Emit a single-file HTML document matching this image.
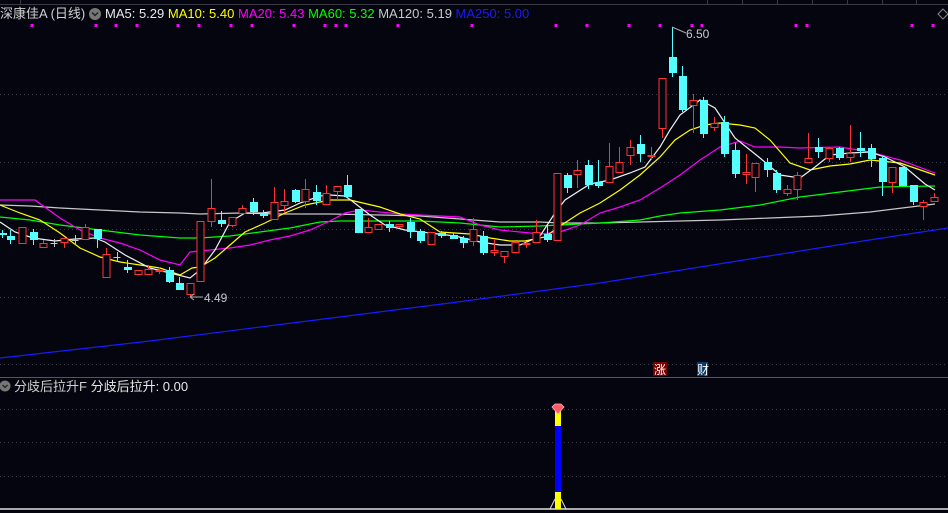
<!DOCTYPE html>
<html><head><meta charset="utf-8"><style>
html,body{margin:0;padding:0;background:#05050f;width:948px;height:513px;overflow:hidden}
svg{display:block}
text{font-family:"Liberation Sans","Noto Sans CJK SC",sans-serif}
</style></head><body>
<svg id="s" width="948" height="513" xmlns="http://www.w3.org/2000/svg">
<rect width="948" height="513" fill="#05050f"/>
<line x1="0" y1="4.5" x2="948" y2="4.5" stroke="#3a3a44"/>
<line x1="20.5" y1="0" x2="20.5" y2="4" stroke="#3a3a44"/>
<g stroke="#3a3a44"><line x1="707.5" y1="0" x2="707.5" y2="4"/><line x1="742.5" y1="0" x2="742.5" y2="4"/><line x1="777.5" y1="0" x2="777.5" y2="4"/><line x1="812.5" y1="0" x2="812.5" y2="4"/><line x1="847.5" y1="0" x2="847.5" y2="4"/><line x1="882.5" y1="0" x2="882.5" y2="4"/><line x1="916.5" y1="0" x2="916.5" y2="4"/></g>
<g stroke="#3c3c48" stroke-dasharray="1,3">
<line x1="0" y1="94.5" x2="948" y2="94.5"/><line x1="0" y1="162.5" x2="948" y2="162.5"/><line x1="0" y1="229.5" x2="948" y2="229.5"/><line x1="0" y1="297.5" x2="948" y2="297.5"/><line x1="0" y1="364.5" x2="948" y2="364.5"/>
<line x1="0" y1="409.5" x2="948" y2="409.5"/><line x1="0" y1="442.5" x2="948" y2="442.5"/><line x1="0" y1="476.5" x2="948" y2="476.5"/>
</g>
<line x1="0" y1="377.5" x2="948" y2="377.5" stroke="#55555f"/>
<line x1="0" y1="509" x2="948" y2="509" stroke="#e0e0e0" stroke-width="1.5"/>
<text x="0" y="18" font-size="13" fill="#d0d0d0">深康佳A (日线)</text>
<circle cx="95" cy="14" r="6" fill="#777"/><path d="M92 12.5l3 3 3-3" stroke="#222" stroke-width="1.5" fill="none"/>
<text x="105" y="18" font-size="13"><tspan fill="#e8e8e8">MA5: 5.29 </tspan><tspan fill="#ffff00"> MA10: 5.40 </tspan><tspan fill="#ff00ff"> MA20: 5.43 </tspan><tspan fill="#00ff00"> MA60: 5.32 </tspan><tspan fill="#c8c8c8"> MA120: 5.19 </tspan><tspan fill="#1a1aff"> MA250: 5.00</tspan></text>
<path d="M943 9l5 5-5 5-5-5z" stroke="#888" fill="none"/>
<g id="dots" fill="#ff00ff"></g>
<g id="ma" fill="none" stroke-width="1.2"></g>
<g id="k"></g>
<line x1="672" y1="27" x2="686" y2="33" stroke="#aaa"/>
<text x="686" y="38" font-size="12" fill="#c8c8d0">6.50</text>
<path d="M190 297l4-3M190 297l4 3M190 297h13" stroke="#aaa" fill="none"/>
<text x="204" y="302" font-size="12" fill="#c8c8d0">4.49</text>
<rect x="653" y="362" width="14" height="14" fill="#7a0000"/><text x="654" y="374" font-size="12" fill="#fff">涨</text>
<rect x="697" y="362" width="11" height="14" fill="#0a3a6a"/><text x="697" y="374" font-size="12" fill="#fff">财</text>
<circle cx="5" cy="386" r="5.5" fill="#777"/><path d="M2.5 385l2.5 2.5 2.5-2.5" stroke="#222" stroke-width="1.3" fill="none"/>
<text x="14" y="391" font-size="13" fill="#d0d0d0">分歧后拉升F <tspan fill="#e8e8e8">分歧后拉升: 0.00</tspan></text>
<rect x="555" y="411" width="6" height="98" fill="#ffff00"/>
<rect x="555" y="426" width="6" height="66" fill="#0000ff"/>
<path d="M550 509l5-10M566 509l-5-10" stroke="#ddd" fill="none"/>
<path d="M552 407l3-3h6l3 3-6 7z" fill="#ff5a6a" stroke="#ffb0b8" stroke-width="0.8"/>
</svg>
<script>
var NS="http://www.w3.org/2000/svg";
function el(p,t,a){var e=document.createElementNS(NS,t);for(var k in a)e.setAttribute(k,a[k]);document.getElementById(p).appendChild(e);}
[32,96,116,137,178,199,231,252,294,325,336,346,398,472,556,587,629,660,692,702,796,807,912,933].forEach(function(x){el("dots","rect",{x:x-1.5,y:24,width:3,height:3});});
var M={
"#1a1aff":[[0,358],[150,341],[300,322],[450,303],[600,283],[750,259],[850,243],[948,228]],
"#c8c8c8":[[0,205],[30,206],[60,208],[100,210],[140,212],[180,213],[200,214],[240,213],[280,214],[330,214],[380,215],[420,216],[500,222],[540,222],[560,223],[600,223],[640,222],[680,221],[720,220],[770,218],[820,216],[870,212],[935,204]],
"#00ff00":[[0,217],[30,220],[60,225],[100,230],[140,235],[180,238],[200,238],[230,236],[260,232],[290,228],[320,222],[340,221],[380,221],[420,221],[460,223],[500,227],[540,226],[560,225],[600,223],[640,220],[660,216],[680,213],[720,210],[760,205],[800,197],[840,192],[880,187],[935,186]],
"#ff00ff":[[0,200],[35,200],[60,218],[80,230],[100,238],[120,243],[140,250],[160,260],[180,265],[190,252],[210,250],[230,248],[250,245],[270,240],[290,236],[310,230],[330,221],[345,213],[360,210],[380,212],[400,214],[420,215],[460,217],[480,225],[500,230],[520,232],[540,234],[560,232],[580,225],[600,213],[620,207],[640,200],[660,188],[680,175],[700,160],[720,147],[740,141],[755,147],[780,147],[800,148],[840,147],[870,152],[900,160],[935,173]],
"#ffff00":[[0,205],[20,213],[40,220],[60,233],[80,248],[100,257],[120,262],[140,265],[160,268],[180,275],[192,268],[200,267],[215,258],[230,245],[245,232],[265,223],[285,213],[305,205],[330,200],[350,200],[380,207],[400,214],[420,219],[440,232],[470,234],[490,238],[510,241],[525,241],[545,237],[560,226],[580,213],[600,203],[620,190],[640,175],[660,157],[675,140],[690,130],[705,125],[720,123],[740,125],[755,128],[770,140],[790,163],[810,170],[830,166],[850,164],[870,160],[900,163],[935,175]],
"#f0f0f0":[[0,222],[15,232],[33,238],[55,241],[75,239],[95,238],[105,242],[125,255],[150,268],[170,273],[190,278],[200,270],[215,250],[230,222],[245,213],[262,213],[285,210],[300,203],[320,196],[330,195],[345,196],[352,201],[370,215],[385,225],[405,230],[430,233],[455,236],[480,242],[500,245],[520,245],[540,236],[555,213],[565,200],[590,184],[610,180],[630,173],[645,167],[660,147],[670,130],[680,115],[700,100],[715,108],[735,138],[760,158],[780,175],[800,178],[815,167],[830,155],[850,153],[870,152],[885,157],[905,167],[925,184],[935,190]]};
for(var c in M)el("ma","polyline",{points:M[c].map(function(p){return p.join(",")}).join(" "),stroke:c});
// x, high, top, bottom, low, type
var K=[[2,230,233,233,238,"c"],[10,230,236,239,244,"c"],[22,227,227,243,243,"r"],[33,229,232,239,245,"c"],[43,240,243,247,248,"r"],[54,239,243,243,247,"g"],[64,238,238,242,248,"r"],[75,235,240,240,245,"g"],[85,224,227,239,239,"r"],[97,229,229,238,248,"c"],[106,248,254,277,277,"r"],[117,252,257,257,262,"g"],[127,260,267,269,273,"c"],[138,270,270,274,274,"r"],[148,265,269,274,274,"r"],[159,267,270,271,274,"r"],[169,267,270,281,283,"c"],[179,277,283,289,290,"c"],[190,283,283,294,297,"r"],[200,221,221,281,281,"r"],[211,179,208,221,227,"r"],[221,211,220,223,227,"c"],[232,217,217,225,227,"r"],[242,205,208,213,213,"r"],[253,198,202,211,215,"c"],[263,210,213,215,218,"c"],[274,187,202,219,219,"r"],[284,189,201,205,213,"r"],[295,189,190,201,203,"c"],[305,179,189,201,208,"r"],[316,185,192,200,205,"c"],[326,185,193,204,204,"r"],[337,186,186,191,200,"r"],[347,175,185,196,196,"c"],[358,209,209,232,232,"c"],[368,218,227,232,232,"r"],[378,224,224,229,229,"r"],[389,221,224,227,232,"c"],[399,224,224,226,228,"r"],[410,218,222,231,238,"c"],[420,229,231,240,243,"c"],[431,232,232,244,245,"r"],[441,231,233,235,238,"c"],[453,233,235,238,239,"c"],[463,236,238,242,248,"c"],[473,218,229,241,246,"r"],[483,231,236,252,255,"c"],[494,240,250,252,256,"r"],[504,251,251,256,263,"r"],[515,242,242,252,252,"r"],[526,242,243,244,248,"r"],[536,220,232,242,242,"r"],[547,225,234,239,242,"c"],[557,173,173,240,241,"r"],[567,173,175,187,193,"c"],[577,160,170,174,188,"r"],[588,160,165,184,189,"c"],[598,160,182,185,188,"c"],[609,143,166,182,183,"r"],[619,147,162,172,172,"r"],[630,140,147,155,165,"r"],[640,135,144,153,162,"c"],[651,147,155,156,160,"r"],[662,78,78,128,138,"r"],[672,27,57,72,77,"c"],[682,66,76,109,112,"c"],[693,94,100,105,133,"r"],[703,97,100,133,138,"c"],[714,117,123,127,131,"r"],[724,116,122,153,157,"c"],[735,143,150,173,178,"c"],[746,154,172,174,184,"r"],[755,163,163,177,192,"r"],[767,158,162,169,177,"c"],[776,170,173,189,193,"c"],[787,185,189,193,196,"r"],[797,172,175,189,200,"r"],[808,133,158,162,162,"r"],[818,138,147,151,158,"c"],[829,147,148,158,162,"r"],[839,147,148,157,160,"c"],[850,125,153,157,162,"r"],[860,132,148,150,157,"c"],[871,144,148,158,167,"c"],[882,156,158,181,196,"c"],[892,167,167,182,193,"r"],[902,167,167,185,185,"c"],[913,185,185,201,205,"c"],[923,200,202,206,220,"r"],[934,193,197,201,201,"r"]];
K.forEach(function(d){var x=d[0],t=d[5];
 if(t=="g"){el("k","path",{d:"M"+(x-3.5)+" "+(d[2]+.5)+"h7M"+(x+.5)+" "+d[1]+"V"+d[4],stroke:"#c8c8c8",fill:"none"});return;}
 var col=t=="r"?"#ff3232":"#54ffff";
 el("k","line",{x1:x+.5,y1:d[1],x2:x+.5,y2:d[4],stroke:col});
 var h=Math.max(d[3]-d[2],1);
 if(t=="r")el("k","rect",{x:x-3,y:d[2]+.5,width:7,height:h,fill:"#05050f",stroke:col});
 else el("k","rect",{x:x-3,y:d[2],width:8,height:h+1,fill:col});
});
</script>
</body></html>
